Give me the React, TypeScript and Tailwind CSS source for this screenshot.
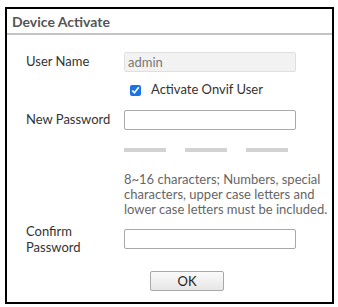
export default function App() {
  return (
    <div className="w-[338px] h-[307px] bg-white pt-[7px] pl-[5px]" style={{ fontFamily: 'Lato, "Noto Sans", sans-serif' }}>
      <div className="w-[329px] h-[297px] border-2 border-black bg-white">
        <div className="h-[26px] border-b-2 border-[#c4c4c4] pl-[5px] flex items-center text-[14px] font-bold text-[#555]">
          Device Activate
        </div>

        <div className="pl-[19px] pt-[17px] text-[13px] text-[#333]">
          <div className="flex items-center h-[20px]">
            <div className="w-[98px]">User Name</div>
            <input
              readOnly
              value="admin"
              className="w-[172px] h-[20px] px-[3px] bg-[#f2f2f2] border border-[#e0e0e0] rounded-[2px] text-[13px] text-[#777] outline-none"
            />
          </div>

          <div className="flex items-center h-[20px] mt-[8px] pl-[104px]">
            <input type="checkbox" defaultChecked className="w-[11px] h-[11px] m-0 accent-[#1a73e8]" />
            <span className="ml-[10px]">Activate Onvif User</span>
          </div>

          <div className="flex items-center h-[20px] mt-[10px]">
            <div className="w-[98px]">New Password</div>
            <input className="w-[172px] h-[20px] border border-[#a8a8a8] rounded-[2px] outline-none" />
          </div>

          <div className="flex gap-[19px] mt-[18px] ml-[98px]">
            <div className="w-[42px] h-[4px] bg-[#d2d2d2]" />
            <div className="w-[42px] h-[4px] bg-[#d2d2d2]" />
            <div className="w-[42px] h-[4px] bg-[#d2d2d2]" />
          </div>

          <div className="ml-[98px] mt-[20px] w-[205px] text-[13px] leading-[15px] text-[#666]">
            8~16 characters; Numbers, special characters, upper case letters and lower case letters must be included.
          </div>

          <div className="flex items-center mt-[6px]">
            <div className="w-[98px] leading-[16px]">
              Confirm
              <br />
              Password
            </div>
            <input className="w-[172px] h-[20px] border border-[#a8a8a8] rounded-[2px] outline-none" />
          </div>

          <div className="flex mt-[16px] ml-[124px]">
            <button className="w-[74px] h-[20px] border border-[#a8a8a8] rounded-[2px] bg-gradient-to-b from-[#fafafa] to-[#e6e6e6] text-[13px] text-[#222]">
              OK
            </button>
          </div>
        </div>
      </div>
    </div>
  );
}
